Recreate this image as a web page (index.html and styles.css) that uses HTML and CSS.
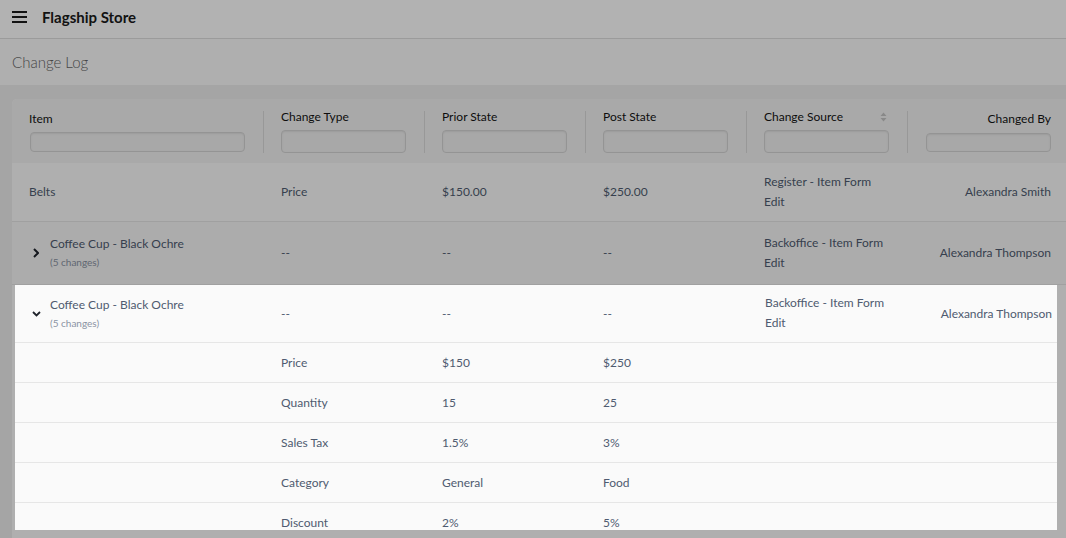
FILE: index.html
```html
<!DOCTYPE html>
<html lang="en">
<head>
<meta charset="utf-8">
<title>Change Log - Flagship Store</title>
<link rel="stylesheet" href="styles.css">
</head>
<body>
<header class="topbar">
  <svg class="menu-icon" width="15" height="12" viewBox="0 0 15 12"><path d="M0 1h15M0 6h15M0 11h15" stroke="#1a1a1a" stroke-width="2" fill="none"/></svg>
  <span class="store-name">Flagship Store</span>
</header>
<div class="pagehead">Change Log</div>
<main class="content">
  <div class="card">
    <div class="thead">
      <div class="th th-first">
        <div class="th-label">Item</div>
        <div class="filter filter-wide"></div>
      </div>
      <div class="th">
        <div class="th-label">Change Type</div>
        <div class="filter"></div>
      </div>
      <div class="th">
        <div class="th-label">Prior State</div>
        <div class="filter"></div>
      </div>
      <div class="th">
        <div class="th-label">Post State</div>
        <div class="filter"></div>
      </div>
      <div class="th">
        <div class="th-label th-sort">Change Source
          <svg width="7" height="10" viewBox="0 0 7 10"><path d="M3.5 0.5L6.5 4H0.5zM3.5 9.5L0.5 6H6.5z" fill="#c4c4c4"/></svg>
        </div>
        <div class="filter"></div>
      </div>
      <div class="th th-last">
        <div class="th-label">Changed By</div>
        <div class="filter filter-small"></div>
      </div>
    </div>

    <div class="row row-belts">
      <div class="cell first">Belts</div>
      <div class="cell">Price</div>
      <div class="cell">$150.00</div>
      <div class="cell">$250.00</div>
      <div class="cell source">Register - Item Form<br>Edit</div>
      <div class="cell last">Alexandra Smith</div>
    </div>

    <div class="row row-group">
      <div class="cell first">
        <span class="chev chev-right"><svg width="6" height="10" viewBox="0 0 6 10"><path d="M1 1l4 4-4 4" stroke="#1f232b" stroke-width="2" fill="none"/></svg></span>
        <span class="item-name">Coffee Cup - Black Ochre<small>(5 changes)</small></span>
      </div>
      <div class="cell">--</div>
      <div class="cell">--</div>
      <div class="cell">--</div>
      <div class="cell source">Backoffice - Item Form<br>Edit</div>
      <div class="cell last">Alexandra Thompson</div>
    </div>

    <section class="expanded">
      <div class="xrow xrow-main">
        <div class="cell first">
          <span class="chev chev-down"><svg width="9" height="6" viewBox="0 0 9 6"><path d="M1 1l3.5 3.5L8 1" stroke="#1f232b" stroke-width="1.8" fill="none"/></svg></span>
          <span class="item-name">Coffee Cup - Black Ochre<small>(5 changes)</small></span>
        </div>
        <div class="cell">--</div>
        <div class="cell">--</div>
        <div class="cell">--</div>
        <div class="cell source">Backoffice - Item Form<br>Edit</div>
        <div class="cell last">Alexandra Thompson</div>
      </div>
      <div class="xrow"><div class="cell first"></div><div class="cell">Price</div><div class="cell">$150</div><div class="cell">$250</div><div class="cell"></div><div class="cell last"></div></div>
      <div class="xrow"><div class="cell first"></div><div class="cell">Quantity</div><div class="cell">15</div><div class="cell">25</div><div class="cell"></div><div class="cell last"></div></div>
      <div class="xrow"><div class="cell first"></div><div class="cell">Sales Tax</div><div class="cell">1.5%</div><div class="cell">3%</div><div class="cell"></div><div class="cell last"></div></div>
      <div class="xrow"><div class="cell first"></div><div class="cell">Category</div><div class="cell">General</div><div class="cell">Food</div><div class="cell"></div><div class="cell last"></div></div>
      <div class="xrow"><div class="cell first"></div><div class="cell">Discount</div><div class="cell">2%</div><div class="cell">5%</div><div class="cell"></div><div class="cell last"></div></div>
    </section>

    <div class="row row-after">
      <div class="cell first"></div><div class="cell"></div><div class="cell"></div><div class="cell"></div><div class="cell"></div><div class="cell last"></div>
    </div>
  </div>
</main>
<div class="dim"></div>
</body>
</html>
```

FILE: styles.css
```css
* { box-sizing: border-box; }

html, body {
  margin: 0;
  height: 100%;
  overflow: hidden;
}

body {
  font-family: Lato, "Open Sans", "Liberation Sans", sans-serif;
  font-size: 12px;
  color: #4f5b70;
  background: #ececec;
}

.topbar {
  height: 39px;
  display: flex;
  align-items: center;
  padding-left: 12px;
  background: #ffffff;
  border-bottom: 1px solid #dedede;
}

.menu-icon { margin-right: 15px; margin-top: -4px; }

.store-name {
  font-size: 15px;
  font-weight: 700;
  color: #1a1a1a;
  margin-top: -5px;
}

.pagehead {
  height: 46px;
  line-height: 46px;
  padding-left: 12px;
  background: #fbfbfb;
  font-size: 15px;
  font-weight: 300;
  color: #666666;
}

.content {
  padding: 14px 0 0 12px;
  background: #ececec;
}

.card {
  background: #fbfbfb;
  border-radius: 5px 0 0 0;
  overflow: hidden;
}

.thead {
  display: grid;
  grid-template-columns: 251px 161px 161px 161px 161px 1fr;
  background: #f3f3f3;
  padding: 12px 0 10px;
}

.th {
  border-left: 1px solid #dadada;
  padding-left: 17px;
  color: #141414;
  font-size: 12px;
  font-weight: 400;
}

.th-label {
  line-height: 16px;
  margin-top: -2px;
  width: 125px;
}

.th-first { border-left: 0; padding-left: 17px; }
.th-first .th-label,
.th-last .th-label { margin-top: 0; }

.th-last { padding-left: 18px; padding-right: 15px; }
.th-last .th-label { width: auto; text-align: right; }

.th-sort {
  display: flex;
  justify-content: space-between;
  align-items: center;
}
.th-sort svg { margin-right: 2px; }

.filter {
  margin-top: 5px;
  width: 125px;
  height: 23px;
  border: 1px solid #d4d4d4;
  border-radius: 4px;
  background: #f1f1f1;
  box-shadow: inset 0 1px 2px rgba(0,0,0,0.08);
}

.filter-wide { width: 215px; height: 20px; margin-left: 1px; }
.filter-small { height: 19px; margin-top: 6px; }

.row, .xrow {
  display: grid;
  grid-template-columns: 251px 161px 161px 161px 161px 1fr;
  align-items: center;
  border-bottom: 1px solid #e6e6e6;
}

.cell { padding-left: 18px; line-height: 20px; }
.cell.first { padding-left: 17px; display: flex; align-items: center; }
.cell.last { text-align: right; padding-right: 15px; padding-left: 0; }

.row-belts { height: 59px; background: #fbfbfb; }
.row-group { height: 63px; background: #f7f7f7; }
.row-after { height: 40px; background: #fbfbfb; }

.chev { display: inline-flex; }
.chev-right { width: 21px; padding-left: 4px; }
.chev-down { width: 18px; }

.item-name { display: flex; flex-direction: column; line-height: 19px; }
.item-name small { font-size: 10px; color: #8a93a3; line-height: 19px; }

.expanded {
  position: relative;
  z-index: 20;
  margin: 0 9px 0 3px;
  height: 245px;
  overflow: hidden;
  background: #fafafa;
}

.expanded .xrow { grid-template-columns: 248px 161px 161px 161px 161px 1fr; height: 40px; }
.expanded .xrow-main { height: 58px; }
.expanded .xrow-main .source { padding-bottom: 2px; }
.expanded .cell.first { padding-left: 17px; }
.expanded .cell.last { padding-right: 5px; }
.expanded .source { padding-left: 19px; }

.dim {
  position: fixed;
  inset: 0;
  background: rgba(0, 0, 0, 0.3);
  z-index: 10;
}
```
